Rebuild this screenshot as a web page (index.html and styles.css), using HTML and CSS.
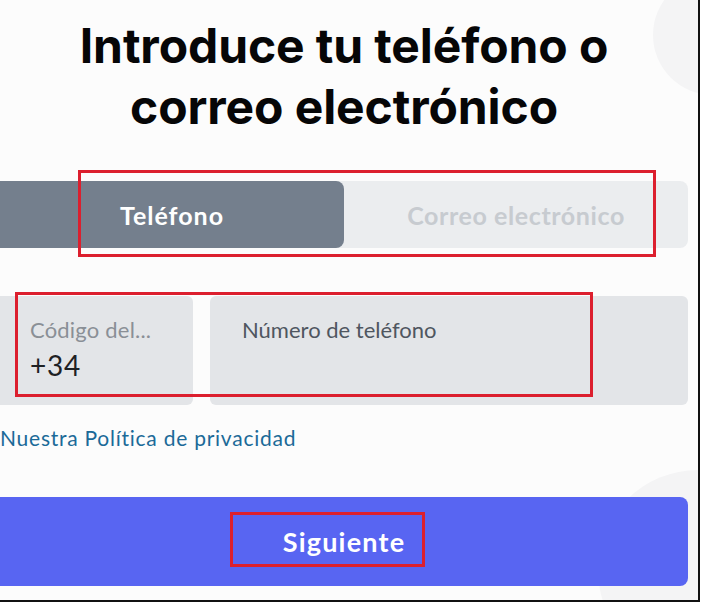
FILE: index.html
```html
<!DOCTYPE html>
<html lang="es">
<head>
    <meta charset="UTF-8">
    <meta name="viewport" content="width=device-width, initial-scale=1.0">
    <title>Introduce tu teléfono o correo electrónico</title>
    <link rel="stylesheet" href="styles.css">
</head>
<body>
<div class="frame">
    <div class="bg-shape shape-top"></div>
    <div class="bg-shape shape-bottom"></div>

    <div class="content">
        <h1>Introduce tu teléfono o<br>correo electrónico</h1>

        <div class="tabs">
            <div class="tab active">Teléfono</div>
            <div class="tab">Correo electrónico</div>
            <div class="mark mark-tabs"></div>
        </div>

        <div class="fields">
            <div class="field field-code">
                <span class="field-label">Código del...</span>
                <span class="field-value">+34</span>
            </div>
            <div class="field field-phone">
                <span class="field-placeholder">Número de teléfono</span>
            </div>
            <div class="mark mark-fields"></div>
        </div>

        <a class="privacy" href="#">Nuestra Política de privacidad</a>

        <button type="button" class="next">
            Siguiente
            <span class="mark mark-button"></span>
        </button>
    </div>
</div>
</body>
</html>
```

FILE: styles.css
```css
* {
    margin: 0;
    padding: 0;
    box-sizing: border-box;
}

body {
    background: #fff;
    font-family: Lato, 'Noto Sans', sans-serif;
    color: #2e3338;
}

.frame {
    position: relative;
    width: 700px;
    height: 602px;
    background: #fcfcfc;
    border-right: 2px solid #111;
    border-bottom: 2px solid #111;
    overflow: hidden;
}

.bg-shape {
    position: absolute;
    background: #f4f4f5;
    border-radius: 50%;
}

.shape-top {
    width: 120px;
    height: 120px;
    right: -75px;
    top: -25px;
}

.shape-bottom {
    width: 200px;
    height: 200px;
    right: -100px;
    bottom: -70px;
}

.content {
    position: relative;
    width: 688px;
    padding-top: 15px;
}

h1 {
    font-family: Inter, 'Noto Sans', sans-serif;
    font-weight: 700;
    font-size: 48px;
    line-height: 61px;
    text-align: center;
    color: #060607;
    letter-spacing: -0.1px;
}

.tabs {
    position: relative;
    display: flex;
    margin-top: 44px;
    height: 67px;
    background: #ebedef;
    border-radius: 0 8px 8px 0;
}

.tab {
    flex: 1;
    display: flex;
    align-items: center;
    justify-content: center;
    font-size: 25px;
    font-weight: 700;
    letter-spacing: 0.6px;
    color: #c7cbd0;
}

.tab.active {
    background: #747f8d;
    color: #fff;
    letter-spacing: 1px;
    border-radius: 0 8px 8px 0;
}

.mark {
    position: absolute;
    border: 3px solid #dc1f2e;
    pointer-events: none;
}

.mark-tabs {
    left: 78px;
    top: -11px;
    width: 578px;
    height: 87px;
}

.fields {
    position: relative;
    display: flex;
    gap: 17px;
    margin-top: 48px;
    height: 109px;
}

.field {
    background: #e3e5e8;
    border-radius: 0 6px 6px 0;
    display: flex;
    flex-direction: column;
    padding: 20px 0 0 30px;
}

.field-code {
    width: 193px;
}

.field-phone {
    flex: 1;
    border-radius: 6px;
    padding-left: 32px;
}

.field-label {
    font-size: 22px;
    letter-spacing: 0.2px;
    color: #8a8f96;
    line-height: 28px;
}

.field-value {
    font-size: 28px;
    letter-spacing: 0.8px;
    color: #1e2124;
    line-height: 42px;
}

.field-placeholder {
    font-size: 22px;
    color: #4f5660;
    line-height: 28px;
}

.mark-fields {
    left: 15px;
    top: -4px;
    width: 578px;
    height: 105px;
}

.privacy {
    display: block;
    margin-top: 19px;
    font-size: 21px;
    letter-spacing: 0.75px;
    line-height: 28px;
    color: #1b6a98;
    text-decoration: none;
}

.next {
    position: relative;
    display: flex;
    align-items: center;
    justify-content: center;
    width: 100%;
    height: 89px;
    margin-top: 45px;
    background: #5865f2;
    border: none;
    border-radius: 0 8px 8px 0;
    font-family: Lato, 'Noto Sans', sans-serif;
    font-size: 27px;
    font-weight: 700;
    letter-spacing: 1.2px;
    color: #fff;
    cursor: pointer;
}

.mark-button {
    left: 230px;
    top: 15px;
    width: 195px;
    height: 55px;
}
```
